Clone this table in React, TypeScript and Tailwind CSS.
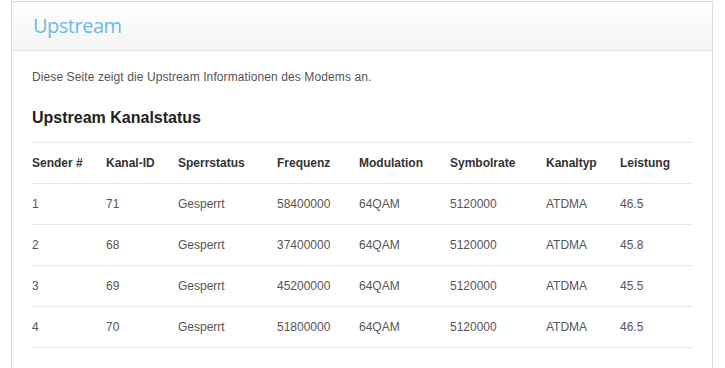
const COLUMNS = [
  { label: "Sender #", width: "w-[74px]" },
  { label: "Kanal-ID", width: "w-[72px]" },
  { label: "Sperrstatus", width: "w-[99px]" },
  { label: "Frequenz", width: "w-[82px]" },
  { label: "Modulation", width: "w-[91px]" },
  { label: "Symbolrate", width: "w-[96px]" },
  { label: "Kanaltyp", width: "w-[74px]" },
  { label: "Leistung", width: "w-[72px]" },
];

const ROWS = [
  ["1", "71", "Gesperrt", "58400000", "64QAM", "5120000", "ATDMA", "46.5"],
  ["2", "68", "Gesperrt", "37400000", "64QAM", "5120000", "ATDMA", "45.8"],
  ["3", "69", "Gesperrt", "45200000", "64QAM", "5120000", "ATDMA", "45.5"],
  ["4", "70", "Gesperrt", "51800000", "64QAM", "5120000", "ATDMA", "46.5"],
];

export default function App() {
  return (
    <div className="min-h-[368px] bg-white pt-px pl-[11px] font-['Liberation_Sans',Arial,sans-serif]">
      <div className="h-[367px] w-[702px] border-x border-t border-[#dcdcdc] bg-white">
        {/* Kopfzeile mit Verlauf */}
        <div className="flex h-[49px] items-center border-b border-[#e2e2e2] bg-gradient-to-b from-white to-[#f4f4f4] px-[21px]">
          <h1 className="font-['Open_Sans',sans-serif] text-[20px] font-normal leading-none tracking-[-0.5px] text-[#6cb9e9]">
            Upstream
          </h1>
        </div>

        <div className="px-[20px]">
          <p className="mt-[17px] text-[12px] leading-[18px] tracking-[0.1px] text-[#555]">
            Diese Seite zeigt die Upstream Informationen des Modems an.
          </p>

          <h2 className="mt-[22px] text-[16px] font-bold leading-[20px] text-[#222]">
            Upstream Kanalstatus
          </h2>

          <table className="mt-[14px] w-[660px] table-fixed border-collapse text-[12px]">
            <thead>
              <tr className="h-[41px] border-y border-[#e8e8e8]">
                {COLUMNS.map((col) => (
                  <th
                    key={col.label}
                    className={`${col.width} p-0 text-left font-bold text-[#333]`}
                  >
                    {col.label}
                  </th>
                ))}
              </tr>
            </thead>
            <tbody>
              {ROWS.map((row) => (
                <tr key={row[0]} className="h-[41px] border-b border-[#e8e8e8]">
                  {row.map((cell, i) => (
                    <td key={i} className="p-0 text-[#555]">
                      {cell}
                    </td>
                  ))}
                </tr>
              ))}
            </tbody>
          </table>
        </div>
      </div>
    </div>
  );
}
